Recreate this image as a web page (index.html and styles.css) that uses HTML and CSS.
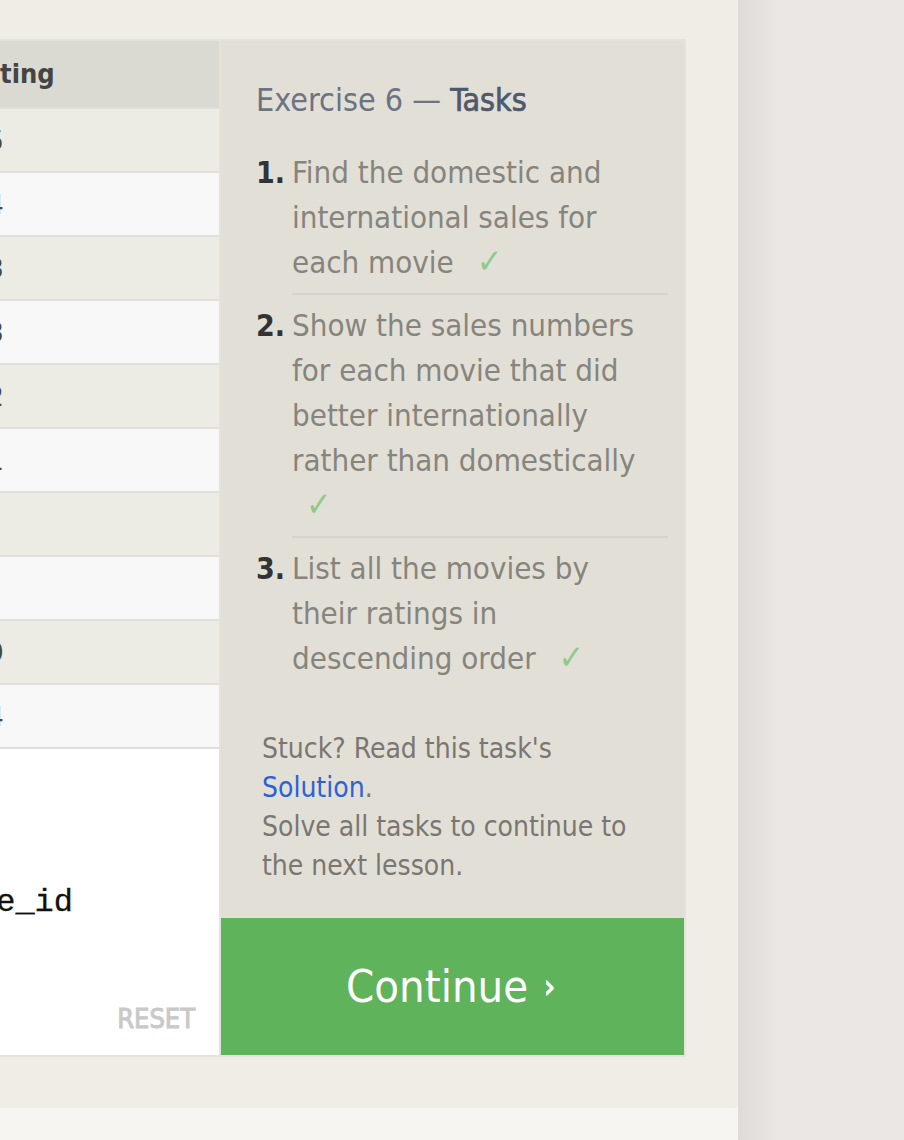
FILE: index.html
```html
<!DOCTYPE html>
<html lang="en">
<head>
<meta charset="utf-8">
<title>SQL Lesson — Exercise 6</title>
<link rel="stylesheet" href="styles.css">
</head>
<body>
<div class="page">
  <div class="main-col">
    <main class="main">
      <section class="card">
        <div class="editor">
          <div class="table-clip">
            <div class="results">
              <div class="row head">Rating</div>
              <div class="row odd">8.5</div>
              <div class="row even">8.4</div>
              <div class="row odd">8.3</div>
              <div class="row even">8.3</div>
              <div class="row odd">8.2</div>
              <div class="row even">8.1</div>
              <div class="row odd">8</div>
              <div class="row even">8</div>
              <div class="row odd">7.9</div>
              <div class="row even last">7.4</div>
            </div>
          </div>
          <div class="code-area">
            <div class="code-clip">
<pre class="code">SELECT title, rating
FROM movies
JOIN boxoffice
    ON movies.id = boxoffice.movie_id
ORDER BY rating DESC;</pre>
            </div>
            <button class="reset" type="button">RESET</button>
          </div>
        </div>
        <aside class="tasks">
          <div class="tasks-body">
            <h2 class="tasks-title">Exercise 6 — <span class="tasks-strong">Tasks</span></h2>
            <ol class="task-list">
              <li class="task"><span class="num">1.</span><span class="txt">Find the domestic and international sales for each movie <span class="check">✓</span></span></li>
              <li class="task"><span class="num">2.</span><span class="txt">Show the sales numbers for each movie that did better internationally rather than domestically <span class="check">✓</span></span></li>
              <li class="task"><span class="num">3.</span><span class="txt">List all the movies by their ratings in descending order <span class="check">✓</span></span></li>
            </ol>
            <div class="stuck">
              <p class="stuck-line">Stuck? Read this task's <a class="solution" href="#">Solution</a>.</p>
              <p class="stuck-line">Solve all tasks to continue to the next lesson.</p>
            </div>
          </div>
          <a class="continue" href="#">Continue <span class="chev">›</span></a>
        </aside>
      </section>
    </main>
    <div class="footer"></div>
  </div>
  <div class="sidebar"></div>
</div>
</body>
</html>
```
FILE: styles.css
```css
html, body {
  margin: 0;
  padding: 0;
}
body {
  font-family: "DejaVu Sans", "Noto Sans", sans-serif;
  font-stretch: condensed;
  background: #ebe7e4;
  overflow: hidden;
}
.page {
  display: flex;
  height: 1140px;
}
.main-col {
  width: 738px;
  flex: none;
  display: flex;
  flex-direction: column;
  background: #f6f5f1;
}
.main {
  height: 1108px;
  background: #f0ede6;
  border-bottom-right-radius: 5px;
  padding-top: 39px;
  box-sizing: border-box;
}
.footer {
  flex: 1;
}
.sidebar {
  flex: 1;
  background: linear-gradient(to right, #dfdbd8 0, #e2dedb 13px, #e6e2df 25px, #ebe7e4 40px);
}

/* card */
.card {
  width: 686px;
  height: 1018px;
  box-sizing: border-box;
  background: #e4e3db;
  padding: 2px 2px 2px 0;
  display: flex;
  gap: 2px;
}
.editor {
  width: 219px;
  flex: none;
  display: flex;
  flex-direction: column;
}
.table-clip {
  display: flex;
  justify-content: flex-end;
  overflow: hidden;
}
.results {
  width: 274px;
  flex: none;
}
.row {
  height: 64px;
  box-sizing: border-box;
  border-top: 2px solid #e0dfd9;
  padding-left: 20px;
  display: flex;
  align-items: center;
  font-size: 27px;
  color: #474747;
}
.row.head {
  height: 66px;
  border-top: 0;
  background: #dbdad2;
  font-weight: bold;
  color: #444;
  padding-bottom: 2px;
}
.row.odd { background: #ecebe4; }
.row.even { background: #f8f8f8; }
.row.last {
  height: 66px;
  border-bottom: 2px solid #e0dfd9;
}

.code-area {
  flex: 1;
  background: #fff;
  display: flex;
  flex-direction: column;
}
.code-clip {
  display: flex;
  justify-content: flex-end;
  overflow: hidden;
  padding: 14px 146px 0 0;
}
.code {
  flex: none;
  margin: 0;
  font-family: "Liberation Mono", "DejaVu Sans Mono", monospace;
  font-size: 32px;
  line-height: 40px;
  color: #111;
  -webkit-text-stroke: 0.3px #111;
}
.reset {
  margin: auto 24px 20px 0;
  align-self: flex-end;
  background: none;
  border: 0;
  padding: 0;
  font: inherit;
  font-size: 27px;
  line-height: 32px;
  color: #c9c9c9;
  -webkit-text-stroke: 1px #c9c9c9;
}

/* tasks panel */
.tasks {
  flex: 1;
  background: #e2dfd7;
  display: flex;
  flex-direction: column;
}
.tasks-body {
  padding: 41px 16px 0 35px;
}
.tasks-title {
  margin: 0;
  font-size: 32px;
  line-height: 37px;
  font-weight: normal;
  color: #6c7383;
}
.tasks-strong {
  color: #4f596b;
  -webkit-text-stroke: 0.7px #4f596b;
}
.task-list {
  list-style: none;
  margin: 23px 0 0;
  padding: 0;
}
.task {
  display: flex;
  padding-top: 8px;
  font-size: 31px;
  line-height: 45px;
}
.num {
  width: 36px;
  flex: none;
  font-weight: bold;
  color: #333;
  font-size: 30px;
}
.txt {
  flex: 1;
  color: #86857d;
  padding: 0 12px 8px 0;
  border-bottom: 2px solid #d6d4c8;
}
.task:last-child .txt {
  border-bottom: 0;
}
.check {
  display: inline-block;
  margin-left: 14px;
  color: #8fca8a;
  font-size: 34px;
  line-height: 30px;
}
.stuck {
  margin: 40px 0 0 6px;
  width: 380px;
  font-size: 28px;
  line-height: 39px;
  color: #7a7672;
}
.stuck-line {
  margin: 0;
}
.solution {
  color: #2b62d6;
  text-decoration: none;
}
.continue {
  margin-top: auto;
  height: 137px;
  background: #5fb35a;
  display: flex;
  align-items: center;
  justify-content: center;
  color: #fff;
  text-decoration: none;
  font-size: 45px;
  padding-right: 4px;
}
.chev {
  font-size: 30px;
  margin-left: 16px;
  -webkit-text-stroke: 1.2px #fff;
}
```
